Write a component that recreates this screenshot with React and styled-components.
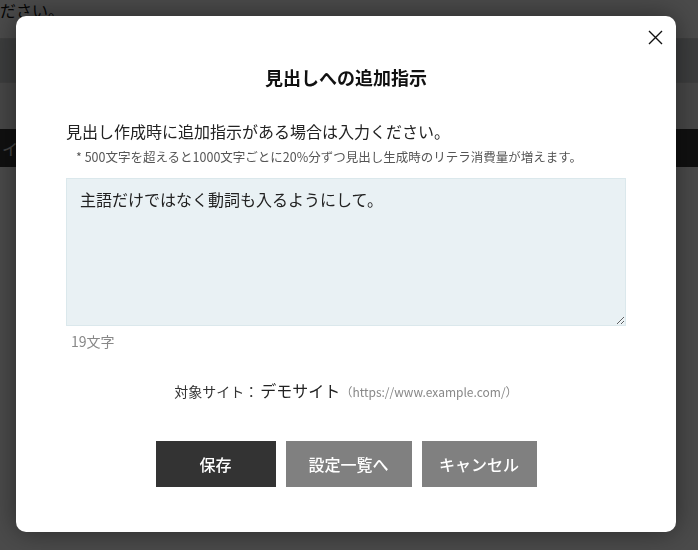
import React from "react";
import styled, { createGlobalStyle } from "styled-components";

const GlobalStyle = createGlobalStyle`
  html, body {
    margin: 0;
    padding: 0;
    background: #ffffff;
    font-family: "Noto Sans CJK JP", "Noto Sans", sans-serif;
    color: #222;
  }
  * { box-sizing: border-box; }
`;

const Page = styled.div`
  height: 550px;
  overflow: hidden;
`;

const PageText = styled.div`
  height: 44px;
  margin-top: -6px;
  font-size: 16px;
  line-height: 32px;
  color: #111;
`;

const Band = styled.div`
  height: ${(p) => p.$h}px;
  background: ${(p) => p.$bg};
  border-top: ${(p) => (p.$line ? "1px solid #d8d8d8" : "none")};
  display: flex;
  align-items: center;
  padding-left: 2px;
  font-size: 16px;
  color: #eee;
`;

const Overlay = styled.div`
  position: fixed;
  inset: 0;
  background: rgba(0, 0, 0, 0.71);
  display: flex;
  padding: 16px 22px 18px 16px;
`;

const Modal = styled.div`
  position: relative;
  flex: 1;
  background: #fff;
  border-radius: 10px;
  box-shadow: 0 0 28px rgba(0, 0, 0, 0.45);
  padding: 48px 50px 45px;
  display: flex;
  flex-direction: column;
`;

const CloseButton = styled.button`
  position: absolute;
  top: 13px;
  right: 13px;
  width: 16px;
  height: 16px;
  padding: 0;
  border: none;
  background: none;
  display: flex;
  align-items: center;
  justify-content: center;
  cursor: pointer;
`;

const Title = styled.h2`
  margin: 0;
  text-align: center;
  font-size: 18px;
  line-height: 27px;
  font-weight: 700;
  color: #111;
`;

const Lead = styled.p`
  margin: 28px 0 0;
  font-size: 16px;
  line-height: 24px;
  color: #222;
`;

const Note = styled.p`
  margin: 4px 0 0;
  padding-left: 10px;
  font-size: 12.5px;
  line-height: 20px;
  color: #555;
`;

const TextArea = styled.textarea`
  display: block;
  margin-top: 11px;
  width: 100%;
  height: 150px;
  padding: 8px 13px;
  background: #e9f1f4;
  border: 1px solid #dbe8ec;
  font-family: inherit;
  font-size: 16px;
  line-height: 24px;
  color: #222;
  outline: none;
`;

const Counter = styled.div`
  margin-top: 5px;
  padding-left: 5px;
  font-size: 14px;
  line-height: 20px;
  color: #888;
`;

const SiteLine = styled.div`
  margin-top: 27px;
  display: flex;
  justify-content: center;
  align-items: baseline;
  line-height: 24px;
`;

const SiteLabel = styled.span`
  font-size: 14px;
  color: #333;
`;

const SiteName = styled.span`
  margin-left: 2px;
  font-size: 16px;
  color: #222;
`;

const SiteUrl = styled.span`
  font-size: 12px;
  color: #888;
`;

const Buttons = styled.div`
  margin-top: 37px;
  display: flex;
  justify-content: center;
  gap: 10px;
`;

const Button = styled.button`
  width: ${(p) => p.$w}px;
  height: 46px;
  border: none;
  border-radius: 0;
  background: ${(p) => (p.$primary ? "#333333" : "#808080")};
  color: #fff;
  font-family: inherit;
  font-size: 16px;
  font-weight: 500;
  cursor: pointer;
`;

const CloseIcon = () => (
  <svg width="15" height="15" viewBox="0 0 15 15">
    <path d="M1 1 L14 14 M14 1 L1 14" stroke="#111" strokeWidth="1.4" fill="none" />
  </svg>
);

export default function App() {
  const text = "主語だけではなく動詞も入るようにして。";
  return (
    <>
      <GlobalStyle />
      <Page>
        <PageText>ださい。</PageText>
        <Band $h={44} $bg="#cfd2d4" $line />
        <Band $h={47} $bg="#f4f4f4" $line />
        <Band $h={38} $bg="#383838">イ</Band>
      </Page>
      <Overlay>
        <Modal>
          <CloseButton aria-label="閉じる">
            <CloseIcon />
          </CloseButton>
          <Title>見出しへの追加指示</Title>
          <Lead>見出し作成時に追加指示がある場合は入力ください。</Lead>
          <Note>* 500文字を超えると1000文字ごとに20%分ずつ見出し生成時のリテラ消費量が増えます。</Note>
          <TextArea defaultValue={text} />
          <Counter>{text.length}文字</Counter>
          <SiteLine>
            <SiteLabel>対象サイト：</SiteLabel>
            <SiteName>デモサイト</SiteName>
            <SiteUrl>（https://www.example.com/）</SiteUrl>
          </SiteLine>
          <Buttons>
            <Button $primary $w={120}>保存</Button>
            <Button $w={126}>設定一覧へ</Button>
            <Button $w={115}>キャンセル</Button>
          </Buttons>
        </Modal>
      </Overlay>
    </>
  );
}
